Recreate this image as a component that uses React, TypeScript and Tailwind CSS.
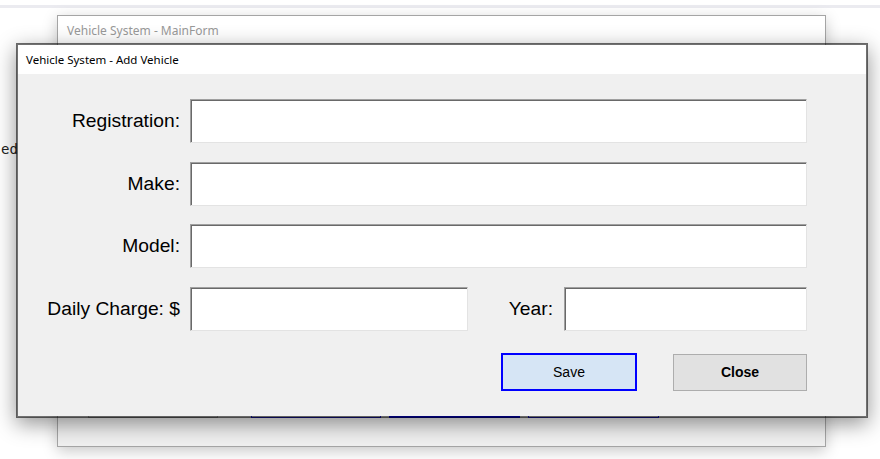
import React from "react";

type FieldProps = {
    width?: string;
};

function TextBox({ width }: FieldProps) {
    return (
        <div
            className={`h-[44px] bg-white border-t border-l border-b border-r border-t-[#a0a0a0] border-l-[#a0a0a0] border-b-[#e3e3e3] border-r-[#e3e3e3] shadow-[inset_1px_1px_0_#696969] ${width ?? "flex-1"}`}
        />
    );
}

function Label({ text }: { text: string }) {
    return (
        <div className="w-[162px] shrink-0 text-right text-[19.25px] text-black leading-none">
            {text}
        </div>
    );
}

export default function App() {
    const labelFont = { fontFamily: '"Liberation Sans", Arial, sans-serif' };
    const titleFont = { fontFamily: '"Noto Sans", "Open Sans", sans-serif' };

    return (
        <div className="relative w-[880px] h-[459px] overflow-hidden bg-white" style={labelFont}>
            {/* strip of something behind, top of screen */}
            <div className="mt-[5px] h-[3px] w-full bg-[#ebebf0]" />

            {/* text peeking out on the desktop */}
            <div
                className="absolute left-[1px] top-[142px] text-[14px] text-[#222] leading-none"
                style={{ fontFamily: '"DejaVu Sans Mono", "Liberation Mono", monospace' }}
            >
                ed
            </div>

            {/* Main form (behind) */}
            <div className="absolute left-[57px] top-[15px] w-[769px] h-[432px] flex flex-col border border-[#a5a5a5] bg-[#f0f0f0] shadow-[0_4px_14px_rgba(0,0,0,0.22)]">
                <div className="h-[30px] bg-white flex items-center pl-[9px] text-[12px] text-[#999999]" style={titleFont}>
                    Vehicle System - MainForm
                </div>
                <div className="flex-1" />
                <div className="flex items-end pl-[30px] pb-[28px]">
                    <div className="w-[130px] h-[34px] bg-[#e1e1e1] border border-[#adadad]" />
                    <div className="ml-[33px] w-[130px] h-[34px] bg-[#e1e1e1] border border-[#2020ff]" />
                    <div className="ml-[8px] w-[131px] h-[34px] bg-[#e1e1e1] border-2 border-[#0000ff]" />
                    <div className="ml-[8px] w-[131px] h-[34px] bg-[#e1e1e1] border border-[#2020ff]" />
                </div>
            </div>

            {/* Add Vehicle dialog */}
            <div className="absolute left-[16px] top-[43px] w-[852px] h-[375px] flex flex-col border-2 border-[rgba(0,0,0,0.56)] bg-clip-padding bg-[#f0f0f0] shadow-[0_6px_20px_rgba(0,0,0,0.42)]">
                <div className="h-[29px] shrink-0 bg-white flex items-center pl-[8px] text-[11.5px] text-black" style={titleFont}>
                    Vehicle System - Add Vehicle
                </div>

                <div className="flex flex-col pt-[25px] pr-[59px]">
                    <div className="flex items-center gap-[10px]">
                        <Label text="Registration:" />
                        <TextBox />
                    </div>
                    <div className="flex items-center gap-[10px] mt-[19px]">
                        <Label text="Make:" />
                        <TextBox />
                    </div>
                    <div className="flex items-center gap-[10px] mt-[18px]">
                        <Label text="Model:" />
                        <TextBox />
                    </div>
                    <div className="flex items-center gap-[10px] mt-[19px]">
                        <Label text="Daily Charge: $" />
                        <TextBox width="w-[278px]" />
                        <div className="flex-1 text-right text-[19.25px] text-black leading-none">Year:</div>
                        <TextBox width="w-[243px] ml-[1px]" />
                    </div>
                </div>

                <div className="flex justify-end items-center gap-[36px] pt-[22px] pr-[59px]">
                    <button className="w-[136px] h-[38px] bg-[#d6e5f5] border-2 border-[#0000ff] text-[14px] text-black">
                        Save
                    </button>
                    <button className="w-[134px] h-[37px] bg-[#e1e1e1] border border-[#adadad] text-[14px] font-bold text-black">
                        Close
                    </button>
                </div>
            </div>
        </div>
    );
}
